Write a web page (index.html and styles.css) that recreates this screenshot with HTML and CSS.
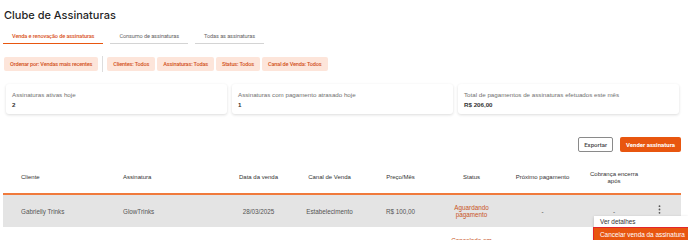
FILE: index.html
```html
<html>
	<head>
		<meta charset="utf-8">
		<link rel="stylesheet" href="styles.css">
	</head>
	<body>
		<div class="page">
			<h1 class="title">Clube de Assinaturas</h1>
			<div class="tabs">
				<div class="tab active">Venda e renovação de assinaturas</div>
				<div class="tab">Consumo de assinaturas</div>
				<div class="tab">Todas as assinaturas</div>
			</div>
			<div class="filters">
				<span class="chip">Ordenar por: Vendas mais recentes</span>
				<span class="divider"></span>
				<span class="chip">Clientes: Todos</span>
				<span class="chip">Assinaturas: Todas</span>
				<span class="chip">Status: Todos</span>
				<span class="chip">Canal de Venda: Todos</span>
			</div>
			<div class="cards">
				<div class="card">
					<p class="card-label">Assinaturas ativas hoje</p>
					<p class="card-value">2</p>
				</div>
				<div class="card">
					<p class="card-label">Assinaturas com pagamento atrasado hoje</p>
					<p class="card-value">1</p>
				</div>
				<div class="card">
					<p class="card-label">Total de pagamentos de assinaturas efetuados este mês</p>
					<p class="card-value">R$ 206,00</p>
				</div>
			</div>
			<div class="actions">
				<button class="btn btn-outline">Exportar</button>
				<button class="btn btn-primary">Vender assinatura</button>
			</div>
			<div class="table-wrap">
				<table class="sales">
					<colgroup>
						<col style="width:102px">
						<col style="width:118px">
						<col style="width:71px">
						<col style="width:71px">
						<col style="width:71px">
						<col style="width:71px">
						<col style="width:71px">
						<col style="width:72px">
						<col style="width:31px">
					</colgroup>
					<thead>
						<tr>
							<th class="left">Cliente</th>
							<th class="left">Assinatura</th>
							<th>Data da venda</th>
							<th>Canal de Venda</th>
							<th>Preço/Mês</th>
							<th>Status</th>
							<th>Próximo pagamento</th>
							<th class="narrow">Cobrança encerra após</th>
							<th></th>
						</tr>
					</thead>
					<tbody>
						<tr class="selected">
							<td class="left">Gabrielly Trinks</td>
							<td class="left">GlowTrinks</td>
							<td>28/03/2025</td>
							<td>Estabelecimento</td>
							<td>R$ 100,00</td>
							<td class="status">Aguardando pagamento</td>
							<td>-</td>
							<td>-</td>
							<td class="more">
								<svg width="3" height="9" viewBox="0 0 3 9"><circle cx="1.5" cy="1.2" r="0.9" fill="#555"/><circle cx="1.5" cy="4.5" r="0.9" fill="#555"/><circle cx="1.5" cy="7.8" r="0.9" fill="#555"/></svg>
							</td>
						</tr>
						<tr>
							<td class="left">Gabrielly Trinks</td>
							<td class="left">GlowTrinks</td>
							<td>28/03/2025</td>
							<td>Estabelecimento</td>
							<td>R$ 100,00</td>
							<td class="status">Cancelado em 28/03/2025</td>
							<td>-</td>
							<td>-</td>
							<td class="more"></td>
						</tr>
					</tbody>
				</table>
				<div class="menu">
					<div class="menu-item">Ver detalhes</div>
					<div class="menu-item danger">Cancelar venda da assinatura</div>
				</div>
			</div>
		</div>
	</body>
</html>
```

FILE: styles.css
```css
html,body{
	margin:0;
	padding:0;
	background:#fff;
	font-family:"Liberation Sans",Arial,sans-serif;
	color:#333;
	overflow:hidden;
}
.page{
	padding:8px 7px 0 3px;
}
.title{
	margin:0 0 0 1px;
	font-family:Inter,sans-serif;
	font-weight:500;
	font-size:11px;
	line-height:14px;
	color:#1f1f1f;
}
.tabs{
	display:flex;
	gap:7px;
	margin:7px 0 0 0;
}
.tab{
	font-family:Roboto,sans-serif;
	font-size:5.6px;
	letter-spacing:-0.1px;
	line-height:7px;
	color:#666;
	padding:4px 9px 3px 9px;
	border-bottom:1px solid #d4d4d4;
}
.tab.active{
	color:#d9531e;
	font-weight:500;
	border-bottom-color:#e8560f;
}
.filters{
	display:flex;
	align-items:center;
	gap:2px;
	margin:12px 0 0 1px;
	height:16px;
}
.chip{
	font-family:Roboto,sans-serif;
	font-size:5.6px;
	font-weight:500;
	letter-spacing:-0.17px;
	line-height:7px;
	padding:3.5px 6px;
	background:#fde5da;
	color:#d2521c;
	border-radius:2px;
}
.divider{
	width:1px;
	height:16px;
	background:#ddd;
	margin:0 2px;
}
.cards{
	display:flex;
	gap:5px;
	margin:12px 2px 0 3px;
}
.card{
	flex:1;
	background:#fff;
	border-radius:3px;
	box-shadow:0 1px 3px rgba(0,0,0,0.14);
	padding:7px 6px 6px 6px;
}
.card-label{
	margin:0;
	font-size:6.2px;
	line-height:7px;
	color:#707070;
}
.card-value{
	margin:3px 0 0 0;
	font-size:6.2px;
	line-height:7px;
	font-weight:bold;
	color:#333;
}
.actions{
	display:flex;
	justify-content:flex-end;
	align-items:center;
	gap:7px;
	margin-top:23px;
}
.btn{
	font-family:Roboto,sans-serif;
	font-size:6px;
	font-weight:500;
	height:15px;
	border-radius:2px;
	padding:0 5px;
	cursor:pointer;
}
.btn-outline{
	background:#fff;
	border:1px solid #8a8a8a;
	color:#444;
}
.btn-primary{
	background:#e8560f;
	border:none;
	color:#fff;
	font-weight:700;
	padding:0 6px;
}
.table-wrap{
	position:relative;
	margin-top:10px;
}
.sales{
	width:678px;
	border-collapse:collapse;
	table-layout:fixed;
	font-size:6.3px;
}
.sales th{
	height:32px;
	font-size:6px;
	font-weight:normal;
	color:#333;
	text-align:center;
	line-height:7px;
	padding:0 4px;
	border-bottom:2px solid #f07a3c;
}
.sales th.narrow{
	padding:0 8px;
}
.sales td{
	height:33px;
	text-align:center;
	color:#555;
	line-height:7px;
	padding:0 6px;
}
.sales .left{
	text-align:left;
	padding-left:18px;
}
.sales tr.selected td{
	background:#e4e4e4;
}
.sales td.status{
	color:#c9541e;
	padding:0 14px;
}
.sales td.more{
	text-align:left;
	padding:0 0 0 8px;
}
.sales td.more svg{
	display:block;
	margin-top:-4px;
}
.menu{
	position:absolute;
	left:591px;
	top:54px;
	width:94px;
	background:#fff;
	box-shadow:0 1px 3px rgba(0,0,0,0.2);
	font-size:6.4px;
}
.menu-item{
	padding:0 6px;
	height:12px;
	line-height:12px;
	color:#333;
	white-space:nowrap;
}
.menu-item.danger{
	height:14px;
	line-height:14px;
	background:#e8560f;
	color:#fff;
	outline:1px solid #e2262a;
}
```
